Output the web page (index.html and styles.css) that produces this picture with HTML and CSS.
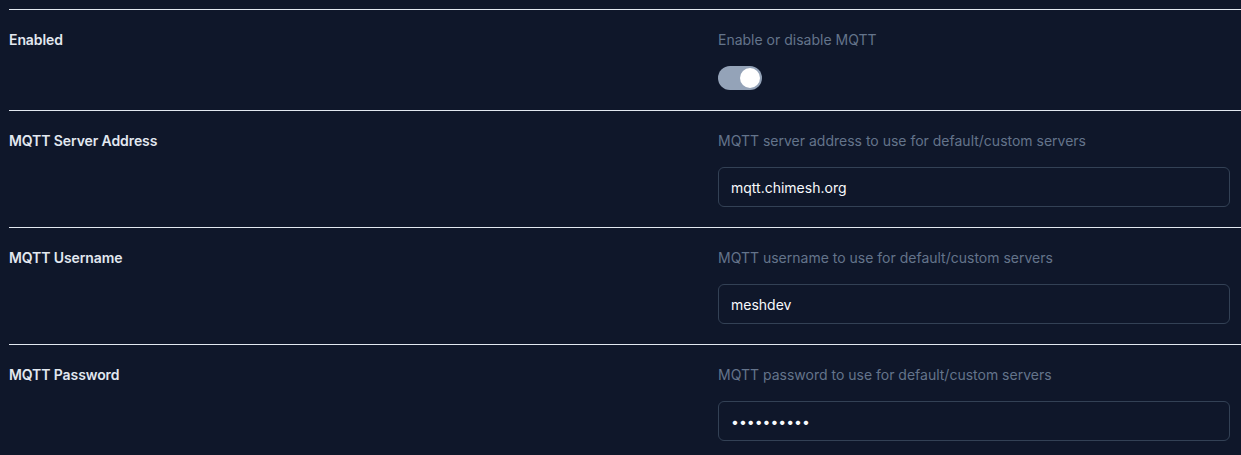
FILE: index.html
```html
<!DOCTYPE html>
<html>
<head>
<meta charset="utf-8">
<link rel="stylesheet" href="styles.css">
</head>
<body>
<div class="form">
  <div class="row">
    <div class="label">Enabled</div>
    <div class="field">
      <div class="desc">Enable or disable MQTT</div>
      <div class="toggle"><span class="thumb"></span></div>
    </div>
  </div>
  <div class="row">
    <div class="label">MQTT Server Address</div>
    <div class="field">
      <div class="desc">MQTT server address to use for default/custom servers</div>
      <div class="input">mqtt.chimesh.org</div>
    </div>
  </div>
  <div class="row">
    <div class="label">MQTT Username</div>
    <div class="field">
      <div class="desc">MQTT username to use for default/custom servers</div>
      <div class="input">meshdev</div>
    </div>
  </div>
  <div class="row">
    <div class="label">MQTT Password</div>
    <div class="field">
      <div class="desc">MQTT password to use for default/custom servers</div>
      <div class="input password">••••••••••</div>
    </div>
  </div>
</div>
</body>
</html>
```
FILE: styles.css
```css
html, body {
  margin: 0;
  background: #0f172a;
  font-family: Inter, "Noto Sans", sans-serif;
  overflow: hidden;
}
.form {
  padding: 9px 0 0 9px;
}
.row {
  display: grid;
  grid-template-columns: 709px 1fr;
  border-top: 1px solid #e2e8f0;
  padding: 20px 11px 20px 0;
}
.label {
  font-size: 14px;
  line-height: 20px;
  font-weight: 600;
  letter-spacing: -0.1px;
  color: #e2e8f0;
}
.field {
  display: flex;
  flex-direction: column;
  gap: 16px;
}
.desc {
  font-size: 14px;
  line-height: 20px;
  color: #64748b;
}
.toggle {
  width: 44px;
  height: 24px;
  border-radius: 12px;
  background: #94a3b8;
  display: flex;
  align-items: center;
  justify-content: flex-end;
  padding: 0 2px;
  box-sizing: border-box;
}
.thumb {
  width: 20px;
  height: 20px;
  border-radius: 50%;
  background: #ffffff;
}
.input {
  height: 40px;
  box-sizing: border-box;
  border: 1px solid #334155;
  border-radius: 6px;
  padding: 0 12px;
  display: flex;
  align-items: center;
  font-size: 14px;
  color: #f8fafc;
}
.password {
  letter-spacing: 0;
}
```
